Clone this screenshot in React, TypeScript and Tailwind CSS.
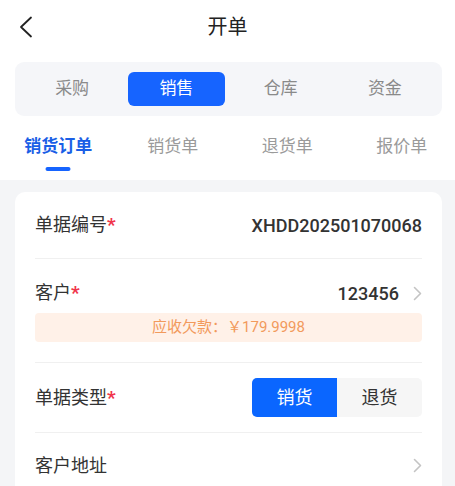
import React, { useState } from 'react';

const font = { fontFamily: 'Roboto, "Noto Sans CJK SC", sans-serif' };

const ChevronRight = () => (
  <svg width="9" height="15" viewBox="0 0 9 15" fill="none" className="shrink-0">
    <path d="M1.5 1.5L7.5 7.5L1.5 13.5" stroke="#c4c4c4" strokeWidth="1.6" strokeLinecap="round" strokeLinejoin="round" />
  </svg>
);

const Star = () => <span className="text-[#f0344a] font-bold text-[19px]">*</span>;

const App: React.FC = () => {
  const [seg, setSeg] = useState(1);
  const [tab, setTab] = useState(0);
  const [type, setType] = useState(0);

  const segs = ['采购', '销售', '仓库', '资金'];
  const tabs = ['销货订单', '销货单', '退货单', '报价单'];

  return (
    <div className="w-[455px] h-[486px] overflow-hidden bg-white" style={font}>
      {/* header */}
      <div className="relative h-[54px] flex items-center justify-center">
        <svg width="14" height="22" viewBox="0 0 14 22" fill="none" className="absolute left-[19px] top-[16px]">
          <path d="M12 1.5L2 11L12 20.5" stroke="#222" strokeWidth="1.8" strokeLinecap="round" strokeLinejoin="round" />
        </svg>
        <span className="text-[20px] text-[#222]">开单</span>
      </div>

      {/* category segment */}
      <div className="ml-[15px] w-[427px] mt-[8px] h-[54px] rounded-[9px] bg-[#f5f6f9] px-[5px] py-[10px] grid grid-cols-4">
        {segs.map((s, i) => (
          <button
            key={s}
            onClick={() => setSeg(i)}
            className={`mx-[4px] rounded-[6px] text-[17px] ${i === seg ? 'bg-[#1664ff] text-white' : 'text-[#8a8a8a]'}`}
          >
            {s}
          </button>
        ))}
      </div>

      {/* doc tabs */}
      <div className="h-[64px] flex pl-[1px] overflow-hidden">
        {tabs.map((t, i) => (
          <button key={t} onClick={() => setTab(i)} className="relative w-[114.5px] shrink-0 flex justify-center pt-[18px]">
            <span className={`text-[17px] leading-[24px] ${i === tab ? 'text-[#1a5fe6] font-bold' : 'text-[#9a9a9a]'}`}>{t}</span>
            {i === tab && <span className="absolute top-[51px] left-1/2 -translate-x-1/2 w-[25px] h-[4px] rounded-full bg-[#1664ff]" />}
          </button>
        ))}
      </div>

      {/* form */}
      <div className="bg-[#f4f5f7] pt-[12px] h-[306px]">
        <div className="ml-[15px] w-[427px] bg-white rounded-[10px] px-[20px]">
          <div className="h-[67px] flex items-center justify-between border-b border-[#f0f0f0]">
            <span className="text-[18px] leading-[24px] text-[#333]">单据编号<Star /></span>
            <span className="text-[18px] font-medium text-[#333]">XHDD202501070068</span>
          </div>

          <div className="pt-[22px] pb-[20px] border-b border-[#f0f0f0]">
            <div className="h-[24px] flex items-center justify-between">
              <span className="text-[18px] leading-[24px] text-[#333]">客户<Star /></span>
              <div className="flex items-center gap-[14px]">
                <span className="text-[18px] font-medium text-[#333]">123456</span>
                <ChevronRight />
              </div>
            </div>
            <div className="mt-[8px] h-[29px] rounded-[4px] bg-[#fff1e8] flex items-center justify-center text-[15px] text-[#f29a5c]">
              应收欠款：￥179.9998
            </div>
          </div>

          <div className="h-[70px] flex items-center justify-between border-b border-[#f0f0f0]">
            <span className="text-[18px] leading-[24px] text-[#333]">单据类型<Star /></span>
            <div className="flex h-[39px] rounded-[5px] overflow-hidden bg-[#f6f6f6]">
              {['销货', '退货'].map((t, i) => (
                <button
                  key={t}
                  onClick={() => setType(i)}
                  className={`w-[85px] text-[18px] ${i === type ? 'bg-[#0a66ff] text-white' : 'text-[#333]'}`}
                >
                  {t}
                </button>
              ))}
            </div>
          </div>

          <div className="h-[64px] flex items-center justify-between">
            <span className="text-[18px] text-[#333]">客户地址</span>
            <ChevronRight />
          </div>
        </div>
      </div>
    </div>
  );
};

export default App;
